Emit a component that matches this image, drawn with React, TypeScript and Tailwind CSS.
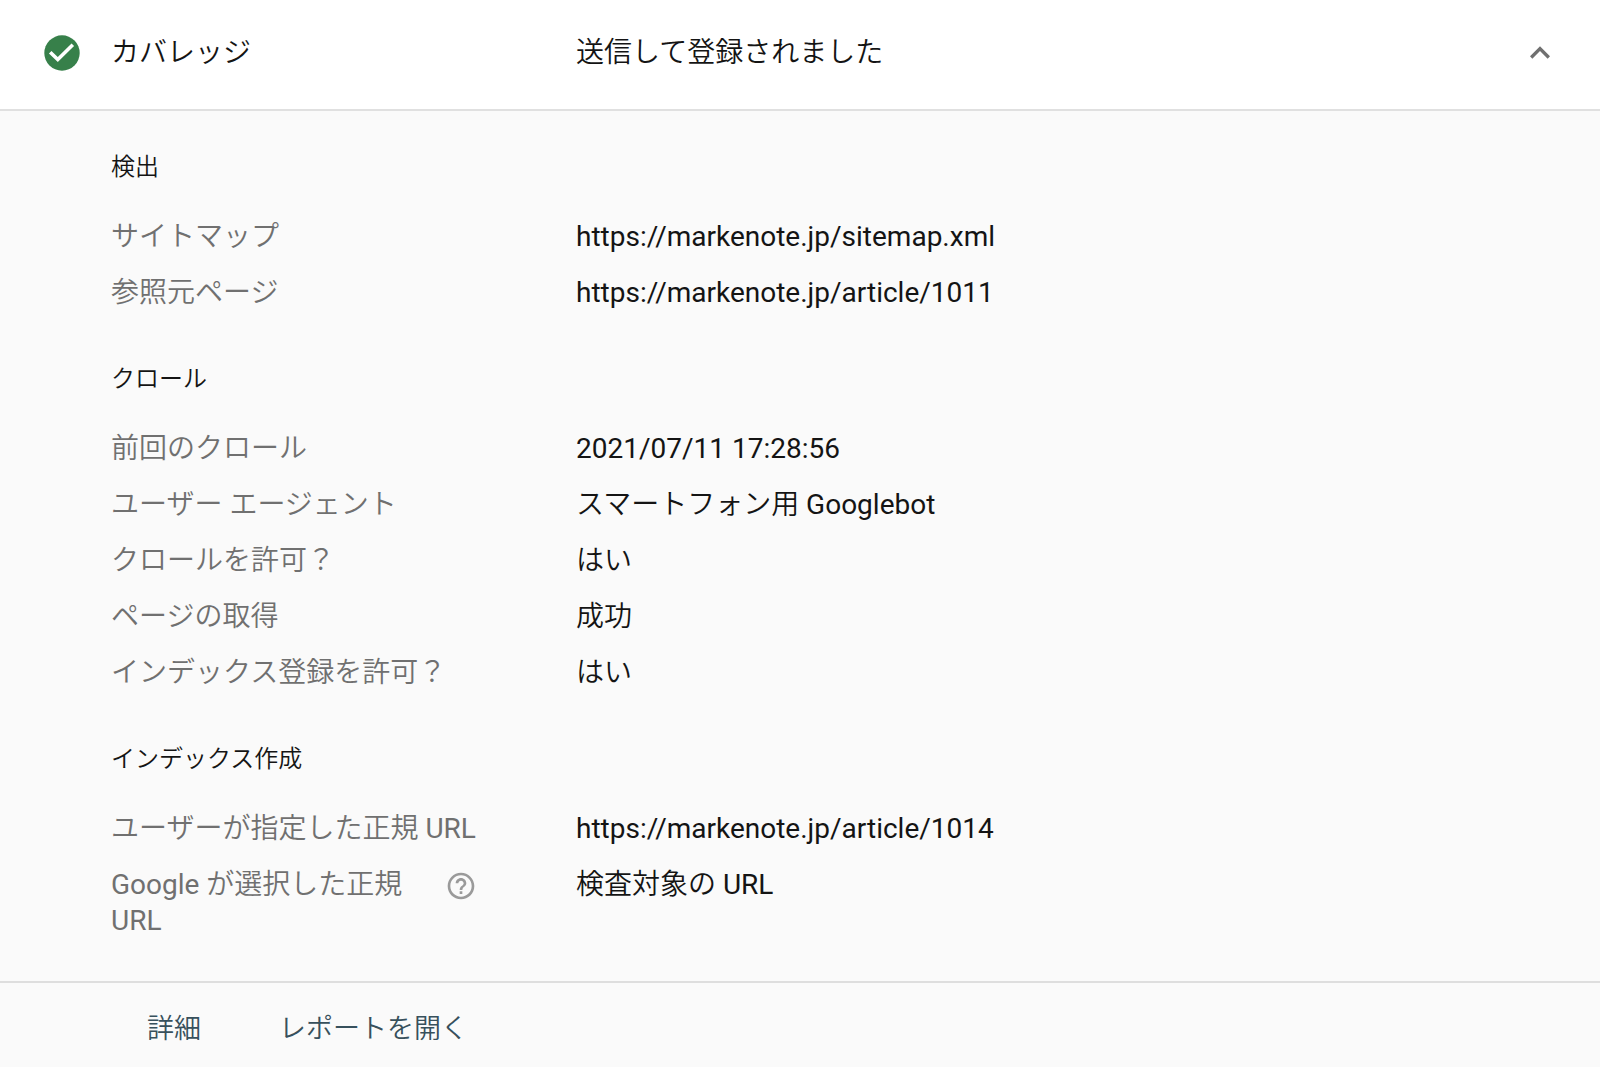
import React, { useState } from 'react';

interface Row {
  label: string;
  value: string;
  help?: boolean;
}

interface Section {
  title: string;
  rows: Row[];
}

const sections: Section[] = [
  {
    title: '検出',
    rows: [
      { label: 'サイトマップ', value: 'https://markenote.jp/sitemap.xml' },
      { label: '参照元ページ', value: 'https://markenote.jp/article/1011' },
    ],
  },
  {
    title: 'クロール',
    rows: [
      { label: '前回のクロール', value: '2021/07/11 17:28:56' },
      { label: 'ユーザー エージェント', value: 'スマートフォン用 Googlebot' },
      { label: 'クロールを許可？', value: 'はい' },
      { label: 'ページの取得', value: '成功' },
      { label: 'インデックス登録を許可？', value: 'はい' },
    ],
  },
  {
    title: 'インデックス作成',
    rows: [
      { label: 'ユーザーが指定した正規 URL', value: 'https://markenote.jp/article/1014' },
      { label: 'Google が選択した正規 URL', value: '検査対象の URL', help: true },
    ],
  },
];

const CheckIcon = () => (
  <svg viewBox="0 0 36 36" className="h-9 w-9 shrink-0" aria-hidden="true">
    <circle cx="18" cy="18" r="17.7" fill="#37804a" />
    <path d="M6.2 17.2 13.8 24.6 28.8 9.8" fill="none" stroke="#fff" strokeWidth="3.6" />
  </svg>
);

const HelpIcon = () => (
  <svg viewBox="0 0 24 24" className="h-8 w-8" fill="#9a9a9a" aria-hidden="true">
    <path d="M11 18h2v-2h-2v2zm1-16C6.48 2 2 6.48 2 12s4.48 10 10 10 10-4.48 10-10S17.52 2 12 2zm0 18c-4.41 0-8-3.59-8-8s3.59-8 8-8 8 3.59 8 8-3.59 8-8 8zm0-14c-2.21 0-4 1.79-4 4h2c0-1.1.9-2 2-2s2 .9 2 2c0 2-3 1.75-3 5h2c0-2.25 3-2.5 3-5 0-2.21-1.79-4-4-4z" />
  </svg>
);

const App: React.FC = () => {
  const [open, setOpen] = useState(true);

  return (
    <main className="min-h-screen bg-[#fafafa] font-['Roboto','Noto_Sans_CJK_JP_DemiLight','Noto_Sans_CJK_JP_Light','Noto_Sans_CJK_JP',sans-serif] text-[28px] leading-9 text-[#141414]">
      <header className="flex items-center border-b-2 border-[#e0e0e0] bg-white pt-[33px] pr-10 pb-9 pl-11">
        <CheckIcon />
        <h1 className="ml-[31px] w-[465px] shrink-0">カバレッジ</h1>
        <p className="flex-1">送信して登録されました</p>
        <button type="button" aria-label="カバレッジ" aria-expanded={open} onClick={() => setOpen(!open)} className="text-[#707070]">
          <svg viewBox="0 0 24 24" className={open ? 'h-10 w-10' : 'h-10 w-10 rotate-180'} fill="currentColor" aria-hidden="true">
            <path d="M12 8l-6 6 1.41 1.41L12 10.83l4.59 4.58L18 14z" />
          </svg>
        </button>
      </header>

      {open && (
        <div className="flex flex-col gap-[52px] pt-10 pr-10 pb-[42px] pl-[111px]">
          {sections.map((section) => (
            <section key={section.title}>
              <h2 className="mb-9 text-2xl leading-8">{section.title}</h2>
              <dl className="flex flex-col gap-5">
                {section.rows.map((row) => (
                  <div key={row.label} className="flex">
                    <dt className="flex w-[465px] shrink-0 items-start text-[#707070]">
                      <span className={row.help ? 'w-80' : 'whitespace-nowrap'}>{row.label}</span>
                      {row.help && (
                        <button type="button" aria-label="ヘルプ" className="mt-[3px] ml-[14px] shrink-0">
                          <HelpIcon />
                        </button>
                      )}
                    </dt>
                    <dd>{row.value}</dd>
                  </div>
                ))}
              </dl>
            </section>
          ))}
        </div>
      )}

      <footer className="flex gap-[78px] border-t-2 border-[#dedede] pt-7 pb-5 pl-[147px] text-[27px] text-[#37505c]">
        <button type="button">詳細</button>
        <button type="button">レポートを開く</button>
      </footer>
    </main>
  );
};

export default App;
